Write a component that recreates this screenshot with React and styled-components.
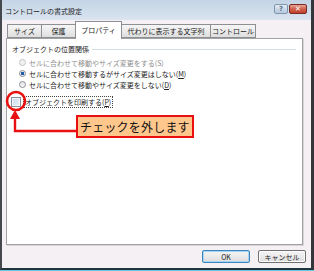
import React from "react";
import styled, { createGlobalStyle } from "styled-components";

const Global = createGlobalStyle`
  html, body { margin: 0; padding: 0; background: #6cc6da; }
  body { width: 314px; height: 271px; overflow: hidden; }
  * { box-sizing: border-box; }
`;

const FONT = `"Noto Sans CJK JP", "Noto Sans", sans-serif`;

const Stage = styled.div`
  position: relative;
  width: 314px;
  height: 271px;
  font-family: ${FONT};
`;

const Window = styled.div`
  width: 314px;
  height: 270px;
  display: flex;
  flex-direction: column;
  background: #f4f0f4;
  border-left: 2px solid #45494e;
  border-right: 3px solid #33373c;
  border-bottom: 2px solid #1f3640;
`;

const TitleBar = styled.div`
  height: 20px;
  flex: none;
  display: flex;
  align-items: center;
  padding: 0 3px 0 3px;
  background: linear-gradient(#c4d4e6, #d3dfec 70%, #dbe5f0);
`;

const Title = styled.div`
  flex: 1;
  font-size: 7px;
  line-height: 10px;
  color: #1c1c1c;
  padding-top: 1px;
`;

const CapButton = styled.div`
  width: ${(p) => p.$w}px;
  height: 10px;
  margin-top: -2px;
  display: flex;
  align-items: center;
  justify-content: center;
  font-family: "DejaVu Sans", sans-serif;
  font-size: 7px;
  font-weight: bold;
  border: 1px solid ${(p) => (p.$close ? "#7a2a22" : "#7f95ab")};
  border-radius: 2px;
  color: ${(p) => (p.$close ? "#ffffff" : "#5b7290")};
  background: ${(p) =>
    p.$close
      ? "linear-gradient(#e8a596, #d0604c 50%, #c1402c)"
      : "linear-gradient(#e6eef7, #c9d8e8 50%, #b7cade)"};
`;

const CapButtons = styled.div`
  display: flex;
  gap: 1px;
  margin-right: 1px;
`;

const Body = styled.div`
  flex: 1;
  display: flex;
  flex-direction: column;
  padding: 0 5px 0 4px;
`;

const TabRow = styled.div`
  height: 18px;
  display: flex;
  align-items: flex-end;
  padding-left: 1px;
  position: relative;
  z-index: 1;
`;

const Tab = styled.div`
  width: ${(p) => p.$w}px;
  height: ${(p) => (p.$active ? 18 : 14)}px;
  margin-left: ${(p) => (p.$first ? 0 : -1)}px;
  margin-bottom: ${(p) => (p.$active ? -1 : 0)}px;
  display: flex;
  align-items: center;
  justify-content: center;
  font-size: 7px;
  line-height: 10px;
  color: #1c1c1c;
  border: 1px solid #8d8f92;
  border-bottom: ${(p) => (p.$active ? "none" : "1px solid #8d8f92")};
  background: ${(p) =>
    p.$active ? "#ffffff" : "linear-gradient(#f5f5f5, #ebebeb 50%, #dedede)"};
  position: relative;
  z-index: ${(p) => (p.$active ? 2 : 1)};
  padding-bottom: ${(p) => (p.$active ? 2 : 0)}px;
`;

const Panel = styled.div`
  height: 207px;
  margin-right: 3px;
  background: #ffffff;
  border: 1px solid #9fa1a4;
  box-shadow: 1px 1px 0 #d8d4d8;
  padding: 5px 6px 0 5px;
`;

const GroupHead = styled.div`
  display: flex;
  align-items: center;
  height: 9px;
  font-size: 7px;
  color: #1c1c1c;
  gap: 3px;
`;

const GroupLine = styled.div`
  flex: 1;
  border-top: 1px solid #d3dde6;
  margin-top: 1px;
`;

const RadioList = styled.div`
  margin-top: 4px;
  padding-left: 7px;
  display: flex;
  flex-direction: column;
`;

const Row = styled.div`
  height: 11px;
  display: flex;
  align-items: center;
  gap: 3px;
  font-size: 7px;
  color: ${(p) => (p.$disabled ? "#8e8e8e" : "#1c1c1c")};
  white-space: nowrap;
`;

const Radio = styled.span`
  width: 7px;
  height: 7px;
  border-radius: 50%;
  flex: none;
  border: 1px solid ${(p) => (p.$disabled ? "#c3c3c3" : "#8a8d91")};
  background: ${(p) =>
    p.$checked
      ? "radial-gradient(circle, #1d5fa8 0 1.6px, #e9eef4 2px)"
      : p.$disabled
      ? "#f2f2f2"
      : "linear-gradient(#e2e4e6, #f8f8f8)"};
`;

const Label = styled.span`
  line-height: 10px;
`;

const Key = styled.span`
  text-decoration: underline;
`;

const CheckRow = styled.div`
  margin-top: 6px;
  margin-left: -1px;
  height: 12px;
  display: flex;
  align-items: center;
  gap: 3px;
  font-size: 7px;
  color: #1c1c1c;
`;

const CheckBox = styled.span`
  width: 10px;
  height: 10px;
  flex: none;
  border: 1px solid #8a9097;
  background: linear-gradient(135deg, #c9dcef, #eaf2fa);
  box-shadow: inset 0 0 0 1px #f4f8fc;
`;

const FocusLabel = styled.span`
  outline: 1px dotted #444;
  outline-offset: 0px;
  padding: 0 1px;
  line-height: 10px;
`;

const ButtonRow = styled.div`
  height: 26px;
  display: flex;
  justify-content: flex-end;
  align-items: flex-start;
  gap: 8px;
  padding-top: 5px;
`;

const Button = styled.div`
  width: 48px;
  height: 13px;
  display: flex;
  align-items: center;
  justify-content: center;
  font-size: 7px;
  color: #1c1c1c;
  border-radius: 2px;
  border: 1px solid ${(p) => (p.$default ? "#3b86bf" : "#707070")};
  background: linear-gradient(#f4f4f4, #ebebeb 50%, #dcdcdc);
  box-shadow: inset 0 0 0 1px ${(p) => (p.$default ? "#a5d5f2" : "#fcfcfc")};
`;

const Overlay = styled.svg`
  position: absolute;
  left: 0;
  top: 0;
  pointer-events: none;
`;

const Callout = styled.div`
  position: absolute;
  left: 76px;
  top: 115px;
  width: 118px;
  height: 23px;
  border: 2px solid #e81010;
  background: #ffc78c;
  display: flex;
  align-items: center;
  padding-left: 2px;
  font-size: 12px;
  letter-spacing: 0.2px;
  color: #111;
  white-space: nowrap;
`;

export default function App() {
  return (
    <Stage>
      <Global />
      <Window>
        <TitleBar>
          <Title>コントロールの書式設定</Title>
          <CapButtons>
            <CapButton $w={14}>?</CapButton>
            <CapButton $w={18} $close>✕</CapButton>
          </CapButtons>
        </TitleBar>
        <Body>
          <TabRow>
            <Tab $w={35} $first>サイズ</Tab>
            <Tab $w={35}>保護</Tab>
            <Tab $w={47} $active>プロパティ</Tab>
            <Tab $w={90}>代わりに表示する文字列</Tab>
            <Tab $w={46}>コントロール</Tab>
          </TabRow>
          <Panel>
            <GroupHead>
              オブジェクトの位置関係
              <GroupLine />
            </GroupHead>
            <RadioList>
              <Row $disabled>
                <Radio $disabled />
                <Label>セルに合わせて移動やサイズ変更をする(S)</Label>
              </Row>
              <Row>
                <Radio $checked />
                <Label>
                  セルに合わせて移動するがサイズ変更はしない(<Key>M</Key>)
                </Label>
              </Row>
              <Row>
                <Radio />
                <Label>
                  セルに合わせて移動やサイズ変更をしない(<Key>D</Key>)
                </Label>
              </Row>
            </RadioList>
            <CheckRow>
              <CheckBox />
              <FocusLabel>
                オブジェクトを印刷する(<Key>P</Key>)
              </FocusLabel>
            </CheckRow>
          </Panel>
          <ButtonRow>
            <Button $default>OK</Button>
            <Button>キャンセル</Button>
          </ButtonRow>
        </Body>
      </Window>
      <Overlay width="314" height="271" viewBox="0 0 314 271">
        <circle cx="16" cy="101" r="9" fill="none" stroke="#e81010" strokeWidth="2.6" />
        <polyline points="77,131 15,131 15,117" fill="none" stroke="#e81010" strokeWidth="2.4" />
        <polygon points="15,110 10,119 20,119" fill="#e81010" />
      </Overlay>
      <Callout>チェックを外します</Callout>
    </Stage>
  );
}
